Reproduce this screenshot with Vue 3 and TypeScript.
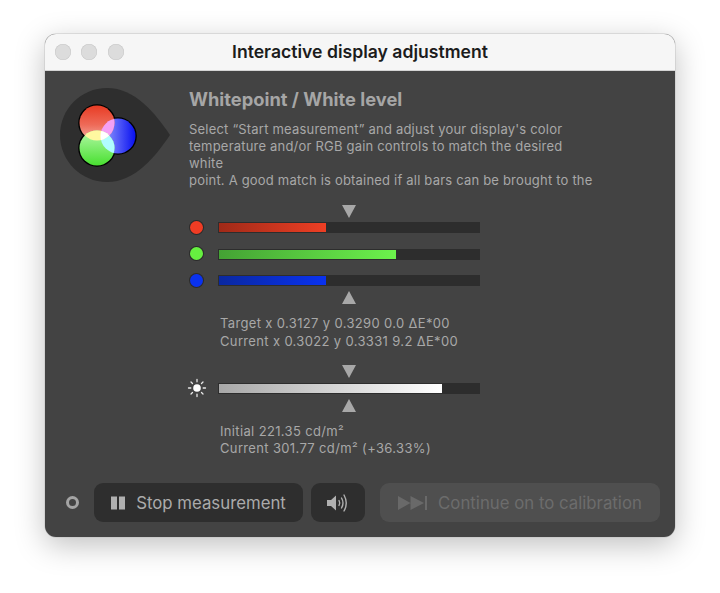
<script setup lang="ts">
interface Bar { name: string; dot: string; fill: string; pct: number }
const bars: Bar[] = [
  { name: 'r', dot: '#f03c24', fill: 'linear-gradient(90deg,#a02a18,#ee3f24)', pct: 41 },
  { name: 'g', dot: '#66f040', fill: 'linear-gradient(90deg,#44a234,#6cf24c)', pct: 68 },
  { name: 'b', dot: '#0a32f0', fill: 'linear-gradient(90deg,#0a28a0,#0a32f0)', pct: 41 },
]
</script>

<template>
  <div class="page">
    <div class="window">
      <header class="titlebar">
        <div class="lights"><i></i><i></i><i></i></div>
        <div class="title">Interactive display adjustment</div>
      </header>
      <main class="content">
        <div class="top">
          <svg class="logo" width="110" height="94" viewBox="0 0 110 94">
            <defs>
              <linearGradient id="lr" x1="0" y1="0" x2="0" y2="1"><stop offset="0" stop-color="#e83c24"/><stop offset=".55" stop-color="#ee6a58"/><stop offset="1" stop-color="#f4b0a4"/></linearGradient>
              <linearGradient id="lg" x1="0" y1="0" x2="0" y2="1"><stop offset="0" stop-color="#b4f8a8"/><stop offset="1" stop-color="#48e030"/></linearGradient>
              <linearGradient id="lb" x1="0" y1="0" x2="1" y2="0"><stop offset="0" stop-color="#a0a8ff"/><stop offset="1" stop-color="#0810f0"/></linearGradient>
              <clipPath id="cr"><circle cx="37" cy="35" r="17.5"/></clipPath>
              <clipPath id="cg"><circle cx="37" cy="60" r="17.5"/></clipPath>
              <clipPath id="cb"><circle cx="58" cy="48" r="17.5"/></clipPath>
            </defs>
            <path d="M110 47C95 25 75 0 47 0C21 0 0 21 0 47C0 73 21 94 47 94C75 94 95 69 110 47Z" fill="#2e2e2e"/>
            <circle cx="37" cy="35" r="18.8" fill="#000"/>
            <circle cx="58" cy="48" r="18.8" fill="#000"/>
            <circle cx="37" cy="60" r="18.8" fill="#000"/>
            <circle cx="58" cy="48" r="17.5" fill="url(#lb)"/>
            <circle cx="37" cy="35" r="17.5" fill="url(#lr)"/>
            <circle cx="37" cy="60" r="17.5" fill="url(#lg)"/>
            <g clip-path="url(#cr)"><circle cx="58" cy="48" r="17.5" fill="#f4a0f4"/></g>
            <g clip-path="url(#cg)"><circle cx="58" cy="48" r="17.5" fill="#b0fcff"/></g>
            <g clip-path="url(#cr)"><circle cx="37" cy="60" r="17.5" fill="#fff8a0"/></g>
            <g clip-path="url(#cr)"><g clip-path="url(#cg)"><circle cx="58" cy="48" r="17.5" fill="#fff"/></g></g>
          </svg>
          <div class="intro">
            <h1>Whitepoint / White level</h1>
            <p>
              Select “Start measurement” and adjust your display's color<br />
              temperature and/or RGB gain controls to match the desired<br />
              white<br />
              point. A good match is obtained if all bars can be brought to the
            </p>
          </div>
        </div>

        <section class="meters">
          <div class="marker-row"><span class="tri down"></span></div>
          <div v-for="b in bars" :key="b.name" class="meter">
            <span class="dot" :style="{ background: b.dot }"></span>
            <div class="track"><div class="fill" :style="{ width: b.pct + '%', background: b.fill }"></div></div>
          </div>
          <div class="marker-row up"><span class="tri upw"></span></div>
          <div class="readout first">
            Target x 0.3127 y 0.3290 0.0 ΔE*00<br />
            Current x 0.3022 y 0.3331 9.2 ΔE*00
          </div>
          <div class="marker-row lum"><span class="tri down"></span></div>
          <div class="meter sunny">
            <svg class="sun" width="20" height="20" viewBox="0 0 20 20">
              <circle cx="10" cy="10" r="3.8" fill="#fff"/>
              <g stroke="#e8e8e8" stroke-width="1.3" stroke-linecap="round">
                <path d="M10 1.5V3.8M10 16.2V18.5M1.5 10H3.8M16.2 10H18.5M4 4L5.5 5.5M14.5 14.5L16 16M4 16L5.5 14.5M14.5 5.5L16 4"/>
              </g>
            </svg>
            <div class="track"><div class="fill lumfill"></div></div>
          </div>
          <div class="marker-row up tight"><span class="tri upw"></span></div>
          <div class="readout second">
            Initial 221.35 cd/m²<br />
            Current 301.77 cd/m² (+36.33%)
          </div>
        </section>

        <footer class="actions">
          <span class="ring"></span>
          <button class="btn stop" type="button">
            <svg width="14" height="14" viewBox="0 0 14 14"><path d="M0 0.5H6V13.5H0ZM8 0.5H14V13.5H8Z" fill="#b0b0b0"/></svg>
            Stop measurement
          </button>
          <button class="btn sound" type="button" aria-label="Sound">
            <svg width="24" height="20" viewBox="0 0 24 20" fill="none">
              <path d="M1 7H5L10 2.5V17.5L5 13H1Z" fill="#b0b0b0"/>
              <g stroke="#b0b0b0" stroke-width="1.4" stroke-linecap="round">
                <path d="M13 7.5Q14.5 10 13 12.5"/>
                <path d="M15.5 5Q18.5 10 15.5 15"/>
                <path d="M18 2Q22.5 10 18 18"/>
              </g>
            </svg>
          </button>
          <button class="btn next" type="button" disabled>
            <svg width="29" height="14" viewBox="0 0 29 14"><path d="M0 0L12.5 7L0 14ZM12.5 0L26 7L12.5 14ZM27 0H29V14H27Z" fill="#696969"/></svg>
            Continue on to calibration
          </button>
        </footer>
      </main>
    </div>
  </div>
</template>

<style>
html, body { margin: 0; background: #fff; }
</style>

<style scoped>
.page {
  width: 720px;
  height: 593px;
  padding: 34px 45px 0;
  box-sizing: border-box;
  overflow: hidden;
  font-family: Inter, "Liberation Sans", sans-serif;
}
.window {
  width: 630px;
  height: 503px;
  border-radius: 11px;
  overflow: hidden;
  background: #434343;
  box-shadow: 0 0 0 0.5px #c4c4c4, 0 8px 30px rgba(0, 0, 0, 0.25);
  display: flex;
  flex-direction: column;
}
.titlebar {
  position: relative;
  height: 36px;
  box-sizing: content-box;
  background: #f6f6f6;
  border-bottom: 1px solid #d4d4d4;
  display: flex;
  align-items: center;
  justify-content: center;
  flex: none;
}
.lights {
  position: absolute;
  left: 10px;
  top: 10px;
  display: flex;
  gap: 10.3px;
}
.lights i {
  display: block;
  width: 16px;
  height: 16px;
  border-radius: 50%;
  background: #dcdcdc;
  box-shadow: inset 0 0 0 0.5px #c8c8c8;
}
.title {
  font-size: 17.6px;
  line-height: 22px;
  margin-top: -1px;
  font-weight: 600;
  color: #1c1c1c;
}
.content {
  flex: 1;
  display: flex;
  flex-direction: column;
  padding: 17px 15px 0;
  min-height: 0;
}
.top {
  display: flex;
  align-items: flex-start;
}
.logo {
  flex: none;
  margin-right: 19px;
}
.intro h1 {
  margin: -1px 0 0;
  font-size: 18.3px;
  line-height: 24px;
  font-weight: 700;
  color: #a6a6a6;
}
.intro p {
  margin: 10px 0 0;
  font-size: 13px;
  letter-spacing: 0.2px;
  line-height: 17.1px;
  color: #a8a8a8;
  white-space: nowrap;
}
.meters {
  margin-left: 126px;
  margin-top: 16px;
  width: 300px;
  display: flex;
  flex-direction: column;
}
.marker-row {
  height: 13px;
  padding-left: 156px;
  display: flex;
  align-items: center;
  margin-bottom: 4px;
}
.marker-row.up { margin: 5px 0 0; }
.marker-row.lum { margin-top: 15px; margin-bottom: 5px; }
.marker-row.tight { margin-top: 5px; }
.tri {
  width: 0;
  height: 0;
  border-left: 7px solid transparent;
  border-right: 7px solid transparent;
}
.tri.down { border-top: 13px solid #a8a8a8; }
.tri.upw { border-bottom: 13px solid #a8a8a8; }
.meter {
  display: flex;
  align-items: center;
  height: 11px;
  margin-bottom: 15.5px;
  position: relative;
  padding-left: 32px;
}
.meter:nth-of-type(4), .meter.sunny { margin-bottom: 0; }
.dot {
  position: absolute;
  left: 4px;
  top: -1.5px;
  width: 13px;
  height: 13px;
  border-radius: 50%;
  box-shadow: 0 0 0 1px #2b2b2b;
}
.sun {
  position: absolute;
  left: 1px;
  top: -4.5px;
}
.track {
  width: 262px;
  height: 11px;
  background: #2d2d2d;
  padding: 1px;
  box-sizing: border-box;
}
.fill { height: 100%; }
.lumfill { width: 85.6%; background: linear-gradient(90deg, #a8a8a8, #fff); }
.readout {
  margin-left: 34px;
  font-size: 13px;
  letter-spacing: 0.35px;
  line-height: 17.2px;
  color: #a8a8a8;
  white-space: nowrap;
}
.readout.first { margin-top: 11px; }
.readout.second { margin-top: 11px; }
.actions {
  margin-top: auto;
  margin-bottom: 15px;
  display: flex;
  align-items: center;
}
.ring {
  width: 13px;
  height: 13px;
  box-sizing: border-box;
  border: 3px solid #a4a4a4;
  border-radius: 50%;
  margin-left: 6px;
  margin-right: 15px;
  flex: none;
}
.btn {
  height: 39px;
  border: none;
  border-radius: 9px;
  display: flex;
  align-items: center;
  justify-content: center;
  font-family: inherit;
  font-size: 16.8px;
  padding: 0;
  flex: none;
}
.stop {
  width: 209px;
  background: #2e2e2e;
  color: #ababab;
  gap: 11px;
}
.sound {
  width: 54px;
  margin-left: 8px;
  background: #2e2e2e;
}
.next {
  width: 280px;
  margin-left: 15px;
  background: #4f4f4f;
  color: #6c6c6c;
  gap: 11px;
}
</style>
